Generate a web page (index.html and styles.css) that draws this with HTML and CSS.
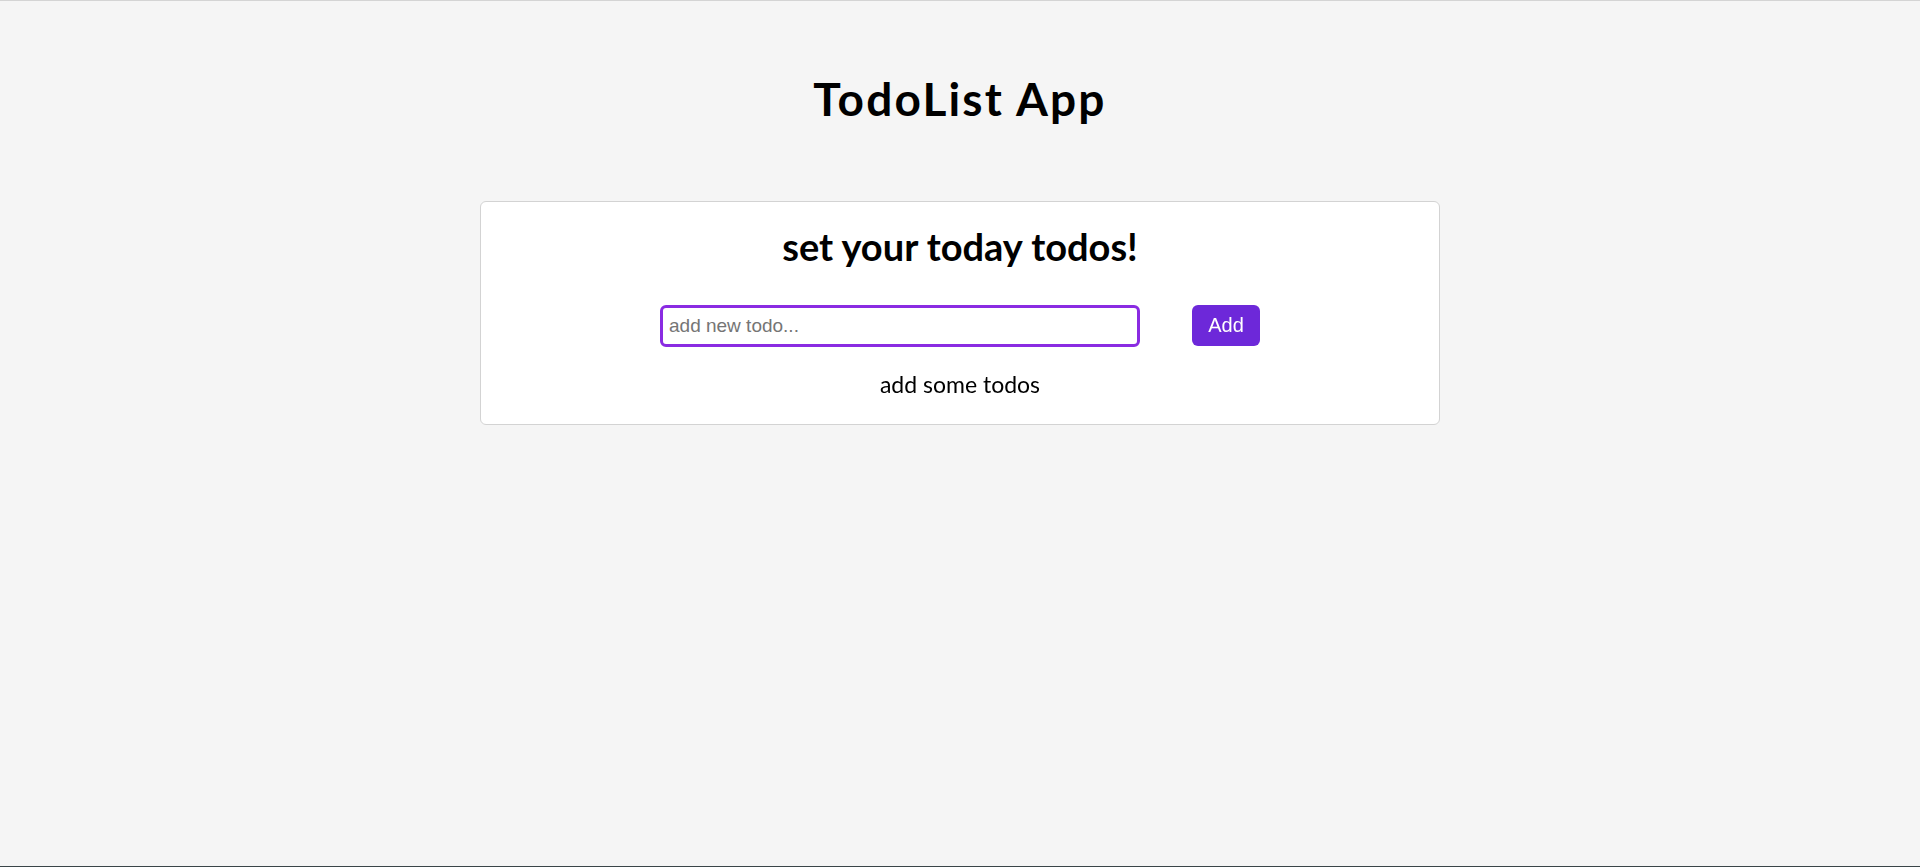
FILE: index.html
```html
<!DOCTYPE html>
<html lang="en">
<head>
<meta charset="utf-8">
<title>TodoList App</title>
<link rel="stylesheet" href="styles.css">
</head>
<body>
<main class="page">
  <h1 class="app-title">TodoList App</h1>
  <section class="card">
    <h2 class="card-title">set your today todos!</h2>
    <form class="todo-form">
      <input class="todo-input" type="text" placeholder="add new todo..." autofocus>
      <button class="add-btn" type="button">Add</button>
    </form>
    <p class="empty">add some todos</p>
  </section>
</main>
</body>
</html>
```

FILE: styles.css
```css
* { box-sizing: border-box; }
html, body { margin: 0; padding: 0; }
body {
  background: #f5f5f5;
  min-height: 100vh;
  border-top: 1px solid #d4d4d4;
  border-bottom: 1px solid #3a4548;
  font-family: Lato, "Open Sans", sans-serif;
  color: #000;
}
.page {
  display: flex;
  flex-direction: column;
  align-items: center;
}
.app-title {
  margin: 0;
  padding-top: 70px;
  font-size: 46px;
  font-weight: 700;
  line-height: 56px;
  letter-spacing: 2.2px;
}
.card {
  margin-top: 74px;
  width: 960px;
  background: #fff;
  border: 1px solid #d3d3d3;
  border-radius: 6px;
  padding: 21px 0 26px;
  display: flex;
  flex-direction: column;
}
.card-title {
  margin: 0;
  text-align: center;
  font-size: 38px;
  font-weight: 700;
  line-height: 46px;
}
.todo-form {
  display: flex;
  justify-content: center;
  align-items: flex-start;
  gap: 52px;
  margin-top: 36px;
}
.todo-input {
  width: 480px;
  height: 42px;
  border: 3px solid #8a2be2;
  border-radius: 6px;
  padding: 0 6px;
  font-family: "Liberation Sans", Arial, sans-serif;
  font-size: 19px;
  outline: none;
  background: #fff;
  color: #000;
}
.todo-input::placeholder { color: #757575; }
.add-btn {
  width: 68px;
  height: 41px;
  border: none;
  border-radius: 6px;
  background: #6d28d9;
  color: #fff;
  font-family: "Liberation Sans", Arial, sans-serif;
  font-size: 20px;
  padding: 0;
}
.empty {
  margin: 23px 0 0;
  text-align: center;
  font-size: 23px;
  line-height: 28px;
}
```
